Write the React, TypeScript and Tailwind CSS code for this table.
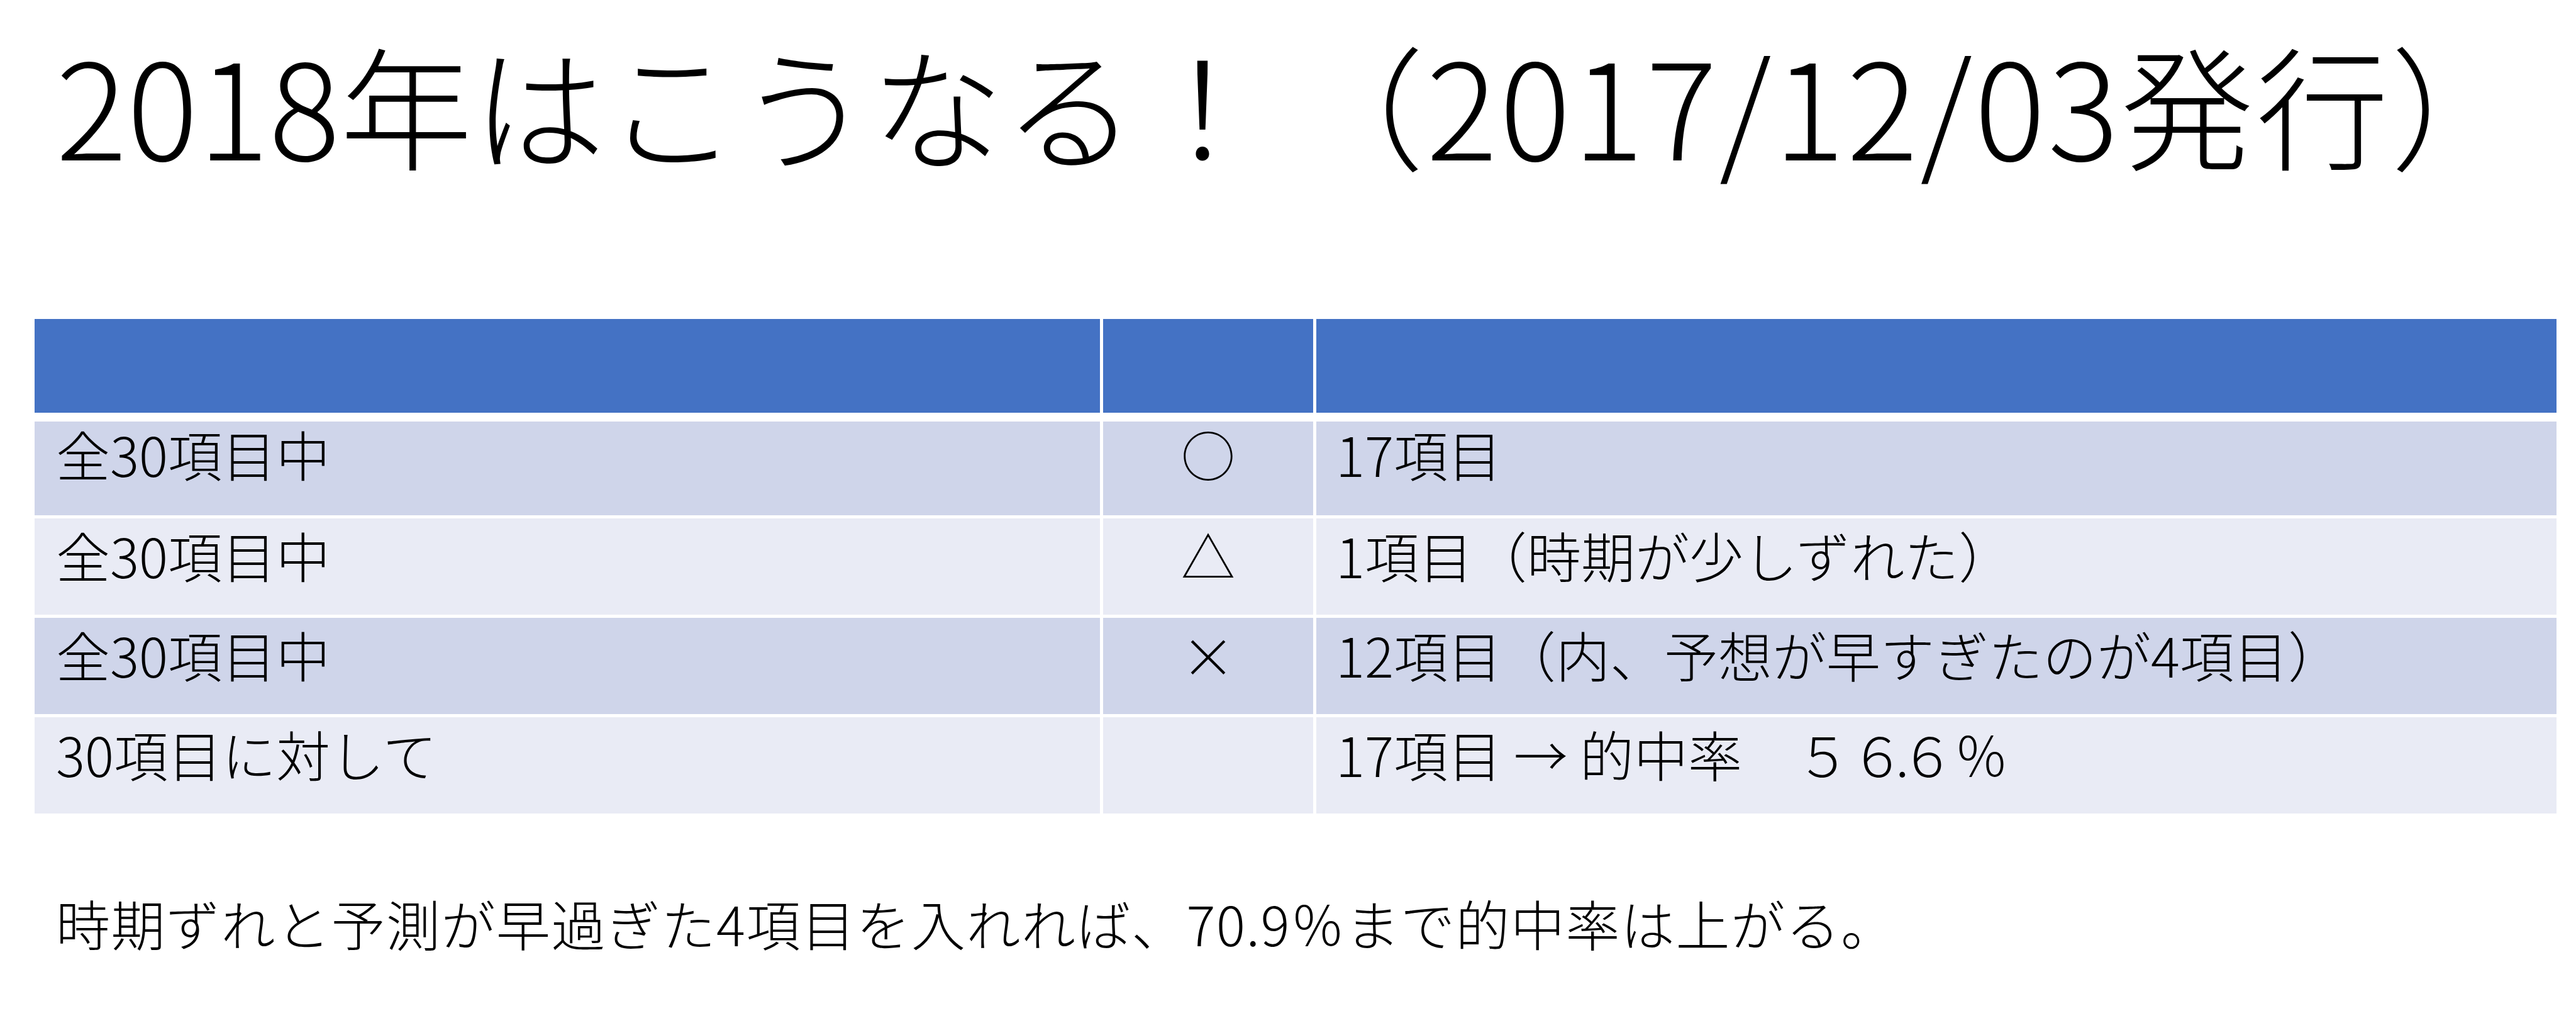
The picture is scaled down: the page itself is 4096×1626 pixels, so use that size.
import type { ReactNode } from 'react';

// 2018年予測スライドの振り返り表

type Row = { label: string; mark: string; result: ReactNode; bg: string; first?: boolean };

const ROWS: Row[] = [
  { label: '全30項目中', mark: '○', result: '17項目', bg: 'bg-[#cfd5ea]', first: true },
  { label: '全30項目中', mark: '△', result: '1項目（時期が少しずれた）', bg: 'bg-[#e9ebf5]' },
  { label: '全30項目中', mark: '×', result: '12項目（内、予想が早すぎたのが4項目）', bg: 'bg-[#cfd5ea]' },
  {
    label: '30項目に対して',
    mark: '',
    result: (
      <>
        17項目 → 的中率　５<span className="tracking-[-14px]">６.</span>６％
      </>
    ),
    bg: 'bg-[#e9ebf5]',
  },
];

function TableRow({ row }: { row: Row }) {
  const h = row.first ? 'h-[149px] pt-[8px]' : 'h-[153px] pt-[15px]';
  return (
    <div className="grid grid-cols-[1694px_334px_1972px] gap-x-[5px]">
      <div className={`${row.bg} ${h} pl-[34px]`}>{row.label}</div>
      <div className={`${row.bg} ${h} text-center`}>{row.mark}</div>
      <div className={`${row.bg} ${h} pl-[31px]`}>{row.result}</div>
    </div>
  );
}

export default function App() {
  return (
    <div className="w-[4096px] h-[1626px] bg-white text-black overflow-hidden font-['Noto_Sans_CJK_JP','Noto_Sans_CJK_SC',sans-serif]">
      <h1 className="pt-[58px] pl-[89px] text-[211px] leading-[211px] font-light whitespace-nowrap">
        2018年はこうなる！<span className="ml-[36px] tracking-[3.5px]">（2017/12/03発行）</span>
      </h1>

      <div className="mt-[238px] ml-[55px] w-[4010px] text-[86px] leading-[86px] font-light whitespace-nowrap">
        <div className="grid grid-cols-[1694px_334px_1972px] gap-x-[5px] h-[149px]">
          <div className="bg-[#4472c4]" />
          <div className="bg-[#4472c4]" />
          <div className="bg-[#4472c4]" />
        </div>
        <div className="mt-[14px] flex flex-col gap-y-[5px]">
          {ROWS.map((r, i) => (
            <TableRow key={i} row={r} />
          ))}
        </div>
      </div>

      <p className="mt-[131px] pl-[89px] text-[86px] leading-[86px] font-light tracking-[1.5px] whitespace-nowrap">
        時期ずれと予測が早過ぎた4項目を入れれば、70.9％まで的中率は上がる。
      </p>
    </div>
  );
}
